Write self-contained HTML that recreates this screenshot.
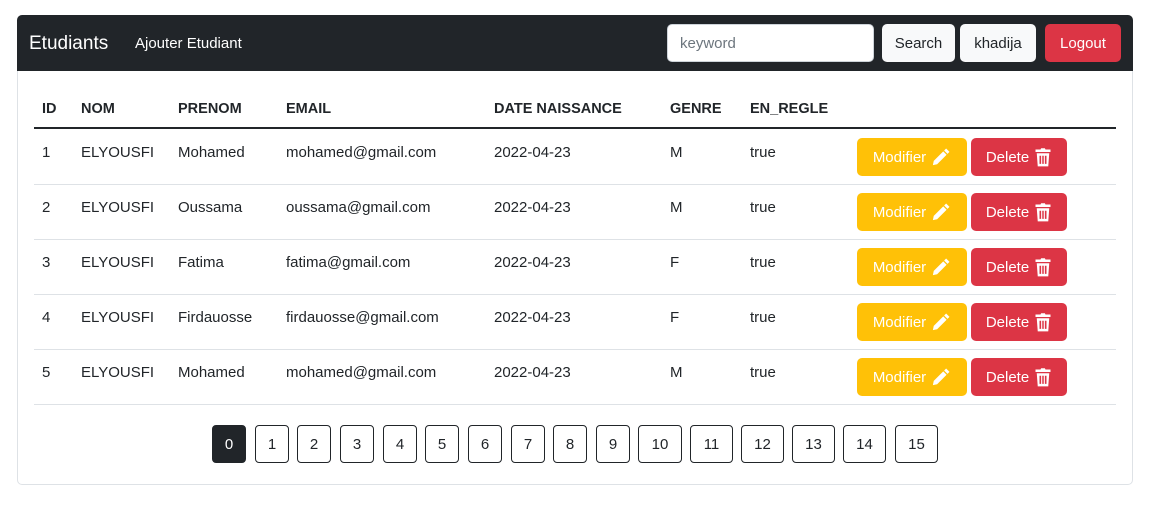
<!DOCTYPE html>
<html><head><meta charset="utf-8"><style>
*{box-sizing:border-box;margin:0;padding:0}
body{width:1161px;height:512px;background:#fff;font-family:"Liberation Sans",sans-serif;color:#212529;position:relative;overflow:hidden}
.card{position:absolute;left:17px;top:15px;width:1116px;height:470px;border:1px solid #dee2e6;border-radius:5px}
.nav{position:absolute;left:17px;top:15px;width:1116px;height:56px;background:#212529;border-radius:5px 5px 0 0}
.a{position:absolute;white-space:nowrap}
.btn{position:absolute;display:flex;align-items:center;justify-content:center;border-radius:5px;font-size:15px}
.th{position:absolute;top:101px;font-weight:bold;font-size:14.5px}
.td{position:absolute;font-size:15px}
.line{position:absolute;left:34px;width:1082px;height:1px;background:#dee2e6}
.pg{position:absolute;top:425px;height:38px;border:1px solid #212529;border-radius:4px;display:flex;align-items:center;justify-content:center;font-size:15px}
</style></head><body>
<div class="card"></div>
<div class="nav"></div>
<div class="a" style="left:29px;top:33px;color:#fff;font-size:19px">Etudiants</div>
<div class="a" style="left:135px;top:35px;color:#fff;font-size:15px">Ajouter Etudiant</div>
<div class="a" style="left:667px;top:24px;width:207px;height:38px;background:#fff;border-radius:5px;border:1px solid #ced4da;padding:10px 12px;font-size:15px;color:#6c757d">keyword</div>
<div class="btn" style="left:882px;top:24px;width:73px;height:38px;background:#f8f9fa">Search</div>
<div class="btn" style="left:960px;top:24px;width:76px;height:38px;background:#f8f9fa">khadija</div>
<div class="btn" style="left:1045px;top:24px;width:76px;height:38px;background:#dc3545;color:#fff">Logout</div>

<div class="th" style="left:42px">ID</div>
<div class="th" style="left:81px">NOM</div>
<div class="th" style="left:178px">PRENOM</div>
<div class="th" style="left:286px">EMAIL</div>
<div class="th" style="left:494px">DATE NAISSANCE</div>
<div class="th" style="left:670px">GENRE</div>
<div class="th" style="left:750px">EN_REGLE</div>
<div class="line" style="top:127px;height:2px;background:#212529"></div>

<div id="rows"></div>
<script>
var d=[["1","Mohamed","mohamed@gmail.com","M"],["2","Oussama","oussama@gmail.com","M"],["3","Fatima","fatima@gmail.com","F"],["4","Firdauosse","firdauosse@gmail.com","F"],["5","Mohamed","mohamed@gmail.com","M"]];
var h="";
var pen='<svg width="20" height="20" viewBox="0 0 16 16" style="margin-left:5px"><path fill="#fff" d="M12.1 1.2l2.7 2.7-1.6 1.6-2.7-2.7zM9.8 3.5l2.7 2.7-7.6 7.6-3.4.7.7-3.4z"/></svg>';
var bin='<svg width="18" height="20" viewBox="0 0 14 16" style="margin-left:5px"><path fill="#fff" d="M1 2h4l.5-1h3l.5 1h4v2H1zM2 5h10l-.8 10.5H2.8zM4.2 7v6.5h1.3V7zM6.4 7v6.5h1.2V7zM8.5 7v6.5h1.3V7z" fill-rule="evenodd"/></svg>';
d.forEach(function(r,i){var y=129+i*55,t=y+15;
h+='<div class="td" style="left:42px;top:'+t+'px">'+r[0]+'</div><div class="td" style="left:81px;top:'+t+'px">ELYOUSFI</div><div class="td" style="left:178px;top:'+t+'px">'+r[1]+'</div><div class="td" style="left:286px;top:'+t+'px">'+r[2]+'</div><div class="td" style="left:494px;top:'+t+'px">2022-04-23</div><div class="td" style="left:670px;top:'+t+'px">'+r[3]+'</div><div class="td" style="left:750px;top:'+t+'px">true</div>';
h+='<div class="btn" style="left:857px;top:'+(y+9)+'px;width:110px;height:38px;background:#ffc107;color:#fff">Modifier'+pen+'</div>';
h+='<div class="btn" style="left:971px;top:'+(y+9)+'px;width:96px;height:38px;background:#dc3545;color:#fff">Delete'+bin+'</div>';
h+='<div class="line" style="top:'+(y+55)+'px"></div>';});
var px=[[212,34],[255,34],[297,34],[340,34],[383,34],[425,34],[468,34],[511,34],[553,34],[596,34],[638,44],[690,43],[741,43],[792,43],[843,43],[895,43]];
px.forEach(function(p,i){h+='<div class="pg" style="left:'+p[0]+'px;width:'+p[1]+'px;'+(i==0?'background:#212529;color:#fff':'')+'">'+i+'</div>';});
document.getElementById("rows").innerHTML=h;
</script>
</body></html>
